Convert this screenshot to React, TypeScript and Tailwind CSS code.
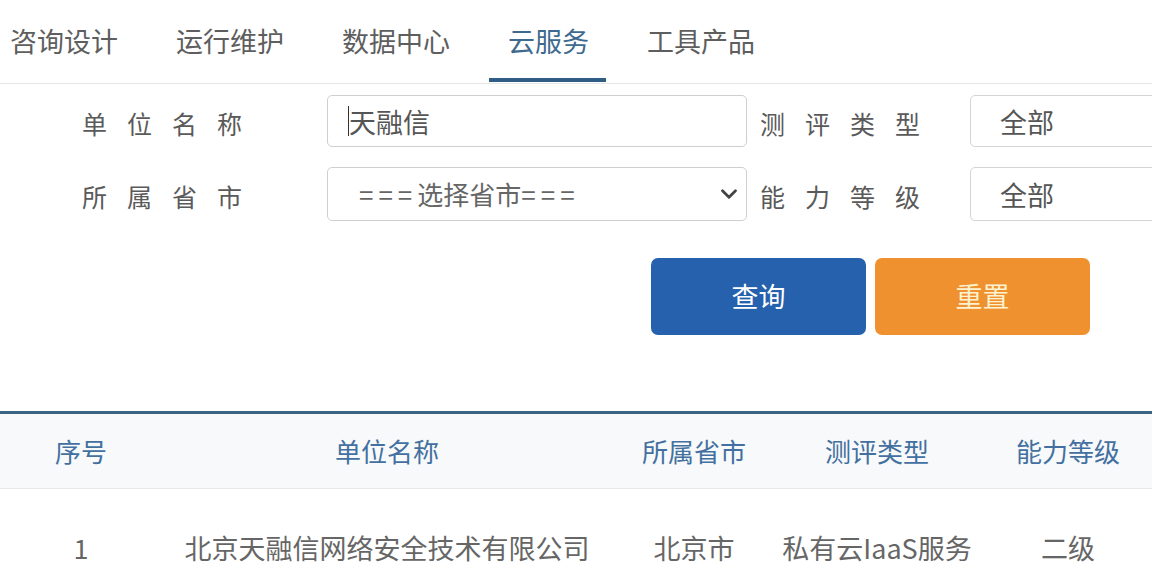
import { ChevronDown } from 'lucide-react'

const tabs = ['咨询设计', '运行维护', '数据中心', '云服务', '工具产品']

const columns = ['序号', '单位名称', '所属省市', '测评类型', '能力等级']
const rows = [['1', '北京天融信网络安全技术有限公司', '北京市', '私有云IaaS服务', '二级']]

const gridCols = 'grid grid-cols-[162px_450px_164px_202px_180px]'

function Label({ text }: { text: string }) {
  return <span className="text-[25px] leading-none tracking-[20px] whitespace-nowrap text-[#5a5a5a]">{text}</span>
}

export default function App() {
  return (
    <div
      className="h-[588px] w-[1164px] overflow-hidden bg-white"
      style={{ fontFamily: '"Noto Sans CJK SC", "Liberation Sans", sans-serif' }}
    >
      <div className="w-[1152px] overflow-hidden">
        {/* tabs */}
        <nav className="flex h-[84px] gap-[58px] border-b border-[#e6e6e6] pl-[10px]">
          {tabs.map((t) => {
            const active = t === '云服务'
            return (
              <div key={t} className="relative flex items-center pb-[3px]">
                <span className={`text-[27px] leading-none ${active ? 'text-[#3f6a8f]' : 'text-[#5e5e5e]'}`}>{t}</span>
                {active && <span className="absolute -left-[19px] -right-[17px] bottom-[1px] h-[4px] bg-[#2f5d86]" />}
              </div>
            )
          })}
        </nav>

        {/* search form */}
        <div className="mt-[11px] grid grid-cols-[327px_420px_223px_1fr] grid-rows-[52px_54px] gap-y-[20px]">
          <div className="flex items-center pl-[82px] pt-[4px]">
            <Label text="单位名称" />
          </div>
          <div className="flex items-center rounded-[5px] border border-[#cfcfcf] pl-[20px]">
            <span className="h-[30px] w-px bg-[#333]" />
            <span className="text-[27px] leading-none text-[#555]">天融信</span>
          </div>
          <div className="flex items-center pl-[13px] pt-[4px]">
            <Label text="测评类型" />
          </div>
          <div className="-mr-[10px] flex items-center rounded-[5px] border border-[#d4d4d4] pl-[29px]">
            <span className="text-[27px] leading-none text-[#555]">全部</span>
          </div>

          <div className="flex items-center pl-[82px] pt-[4px]">
            <Label text="所属省市" />
          </div>
          <div className="flex items-center justify-between rounded-[5px] border border-[#cfcfcf] pl-[31px] pr-[4px]">
            <span className="text-[26px] leading-none whitespace-nowrap text-[#666]">
              <span className="tracking-[5px]">===</span>选择省市<span className="tracking-[5px]">===</span>
            </span>
            <ChevronDown className="h-[26px] w-[26px] text-[#444]" strokeWidth={2.6} />
          </div>
          <div className="flex items-center pl-[13px] pt-[4px]">
            <Label text="能力等级" />
          </div>
          <div className="-mr-[10px] flex items-center rounded-[5px] border border-[#d4d4d4] pl-[29px]">
            <span className="text-[27px] leading-none text-[#555]">全部</span>
          </div>
        </div>

        {/* buttons */}
        <div className="mt-[37px] flex gap-[9px] pl-[651px]">
          <button className="flex h-[77px] w-[215px] items-center justify-center rounded-[7px] bg-[#2561ad] text-[27px] text-white">
            查询
          </button>
          <button className="flex h-[77px] w-[215px] items-center justify-center rounded-[7px] bg-[#ef912f] text-[27px] text-[#fdf2cf]">
            重置
          </button>
        </div>

        {/* table */}
        <div className="mt-[76px] border-t-[3px] border-[#3a6481]">
          <div className={`${gridCols} h-[75px] items-center border-b border-[#e8e8e8] bg-[#f7f9fa]`}>
            {columns.map((c) => (
              <div key={c} className="text-center text-[26px] leading-none text-[#4370a0]">
                {c}
              </div>
            ))}
          </div>
          {rows.map((r) => (
            <div key={r[0]} className={`${gridCols} h-[116px] items-center`}>
              {r.map((v, i) => (
                <div key={i} className="text-center text-[27px] leading-none whitespace-nowrap text-[#666]">
                  {v}
                </div>
              ))}
            </div>
          ))}
        </div>
      </div>
    </div>
  )
}
